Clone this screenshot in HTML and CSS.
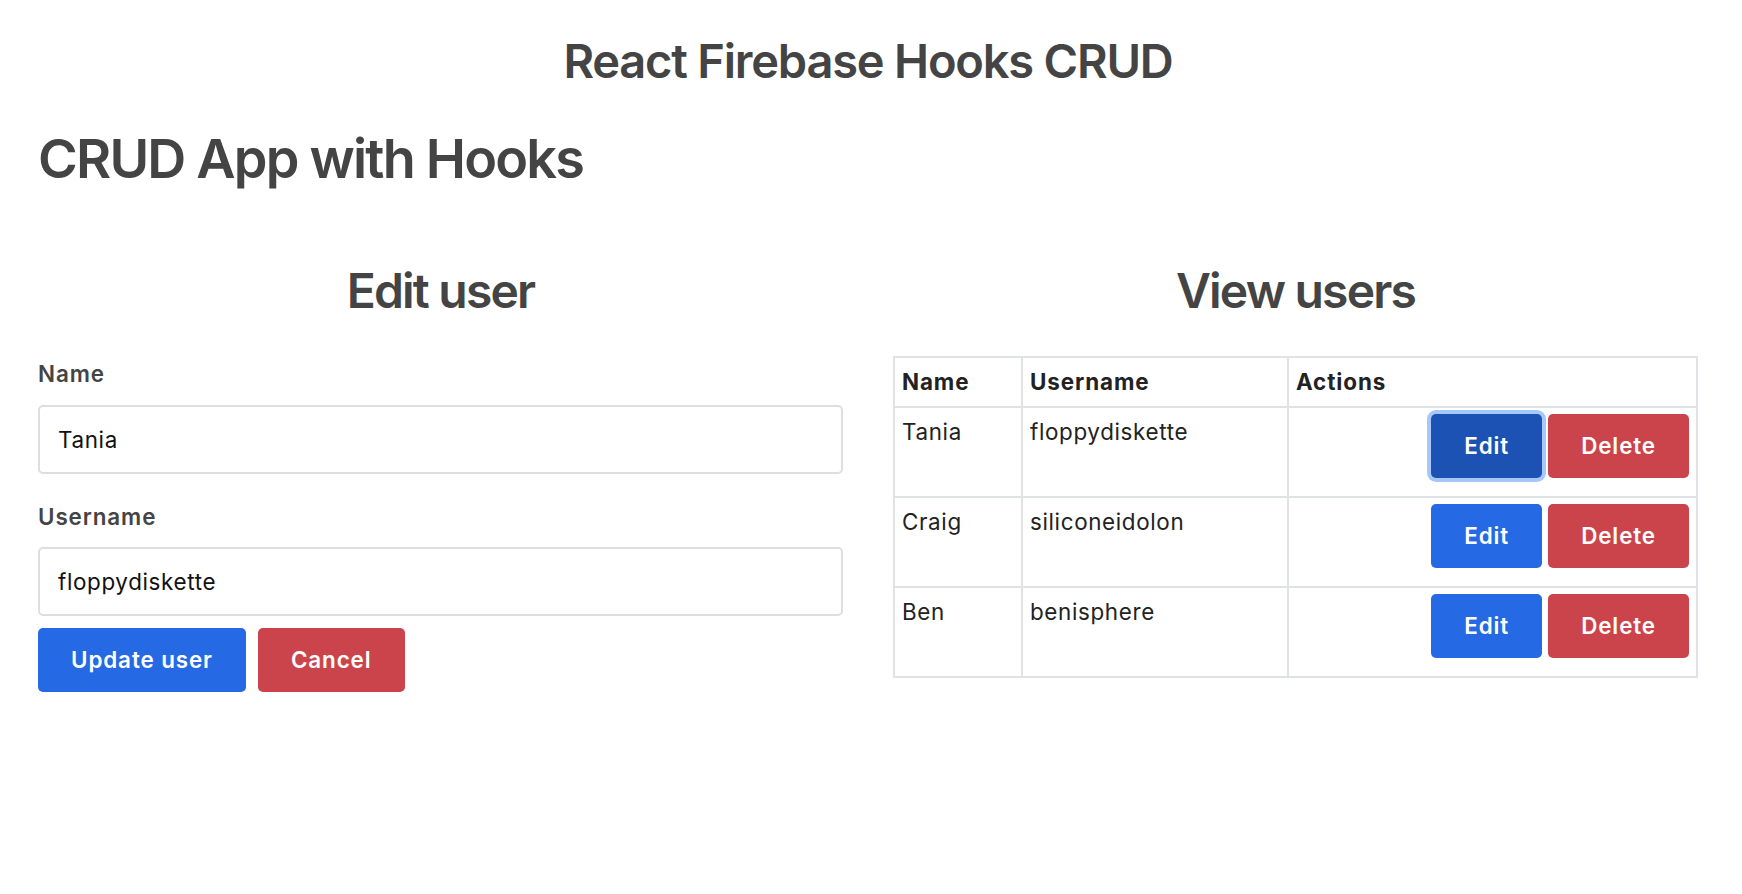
FILE: index.html
```html
<!DOCTYPE html>
<html lang="en">
<head>
<meta charset="utf-8">
<title>React Firebase Hooks CRUD</title>
<link rel="stylesheet" href="styles.css">
</head>
<body>
<div class="container">
  <div class="app-title">React Firebase Hooks CRUD</div>
  <h1 class="page-title">CRUD App with Hooks</h1>
  <div class="columns">
    <section class="column">
      <h2 class="section-title">Edit user</h2>
      <form class="user-form">
        <label class="field-label">Name</label>
        <input class="field-input field-gap" type="text" value="Tania">
        <label class="field-label">Username</label>
        <input class="field-input" type="text" value="floppydiskette">
        <div class="form-actions">
          <button type="button" class="btn btn-primary">Update user</button>
          <button type="button" class="btn btn-danger">Cancel</button>
        </div>
      </form>
    </section>
    <section class="column">
      <h2 class="section-title">View users</h2>
      <table class="users-table">
        <colgroup>
          <col class="col-name">
          <col class="col-username">
          <col class="col-actions">
        </colgroup>
        <thead>
          <tr><th>Name</th><th>Username</th><th>Actions</th></tr>
        </thead>
        <tbody>
          <tr>
            <td>Tania</td><td>floppydiskette</td>
            <td><div class="row-actions"><button class="btn btn-primary btn-focus">Edit</button><button class="btn btn-danger">Delete</button></div></td>
          </tr>
          <tr>
            <td>Craig</td><td>siliconeidolon</td>
            <td><div class="row-actions"><button class="btn btn-primary">Edit</button><button class="btn btn-danger">Delete</button></div></td>
          </tr>
          <tr>
            <td>Ben</td><td>benisphere</td>
            <td><div class="row-actions"><button class="btn btn-primary">Edit</button><button class="btn btn-danger">Delete</button></div></td>
          </tr>
        </tbody>
      </table>
    </section>
  </div>
</div>
</body>
</html>
```

FILE: styles.css
```css
* { box-sizing: border-box; }

body {
  margin: 0;
  font-family: Inter, "Noto Sans", "Liberation Sans", sans-serif;
  font-size: 22.4px;
  line-height: 1.5;
  letter-spacing: 0.65px;
  color: #222;
  background: #fff;
}

.container {
  padding: 0 44px 0 38px;
}

.app-title {
  margin: 33px 0 0;
  font-size: 47px;
  line-height: 56px;
  font-weight: 600;
  letter-spacing: -1.2px;
  text-align: center;
  color: #444;
}

.page-title {
  margin: 37px 0 0;
  font-size: 54px;
  line-height: 65px;
  font-weight: 600;
  letter-spacing: -1.8px;
  color: #444;
}

.columns {
  display: grid;
  grid-template-columns: 1fr 1fr;
  column-gap: 50px;
  margin-top: 71px;
}

.section-title {
  margin: 0 0 36px;
  font-size: 48px;
  line-height: 58px;
  font-weight: 600;
  letter-spacing: -1.8px;
  text-align: center;
  color: #444;
}

.user-form {
  display: flex;
  flex-direction: column;
  padding-top: 1px;
}

.field-label {
  font-weight: 600;
  letter-spacing: 0.9px;
  color: #444;
  line-height: 33.6px;
  margin-bottom: 14px;
}

.field-input {
  height: 69px;
  padding: 0 18px;
  border: 2px solid #dedede;
  border-radius: 5px;
  font: inherit;
  letter-spacing: 0.65px;
  color: #111;
  background: #fff;
}

.field-gap { margin-bottom: 26px; }

.form-actions {
  display: flex;
  gap: 12px;
  margin-top: 12px;
}

.btn {
  height: 64px;
  padding: 0 33px;
  border: 0;
  border-radius: 5px;
  font: inherit;
  font-weight: 600;
  letter-spacing: 0.9px;
  color: #fff;
  cursor: pointer;
}

.btn-primary { background: #2669e4; }
.btn-danger { background: #cc444b; }

.btn-focus {
  background: #1c52b4;
  box-shadow: 0 0 0 4px #a6c8f8;
}

.users-table {
  width: 100%;
  border-collapse: collapse;
  table-layout: fixed;
  border: 2px solid #dfe2e6;
}

.col-name { width: 128px; }
.col-username { width: 266px; }

.users-table th,
.users-table td {
  border: 2px solid #dfe2e6;
  padding: 7px 7px 6px;
  text-align: left;
  vertical-align: top;
  line-height: 33.6px;
  color: #222;
}

.users-table th {
  font-weight: 700;
  letter-spacing: 0.9px;
  padding-bottom: 7px;
}

.users-table td:last-child {
  padding-top: 6px;
}

.row-actions {
  display: flex;
  justify-content: flex-end;
  gap: 6px;
  margin: 0 0 12px;
}
```
